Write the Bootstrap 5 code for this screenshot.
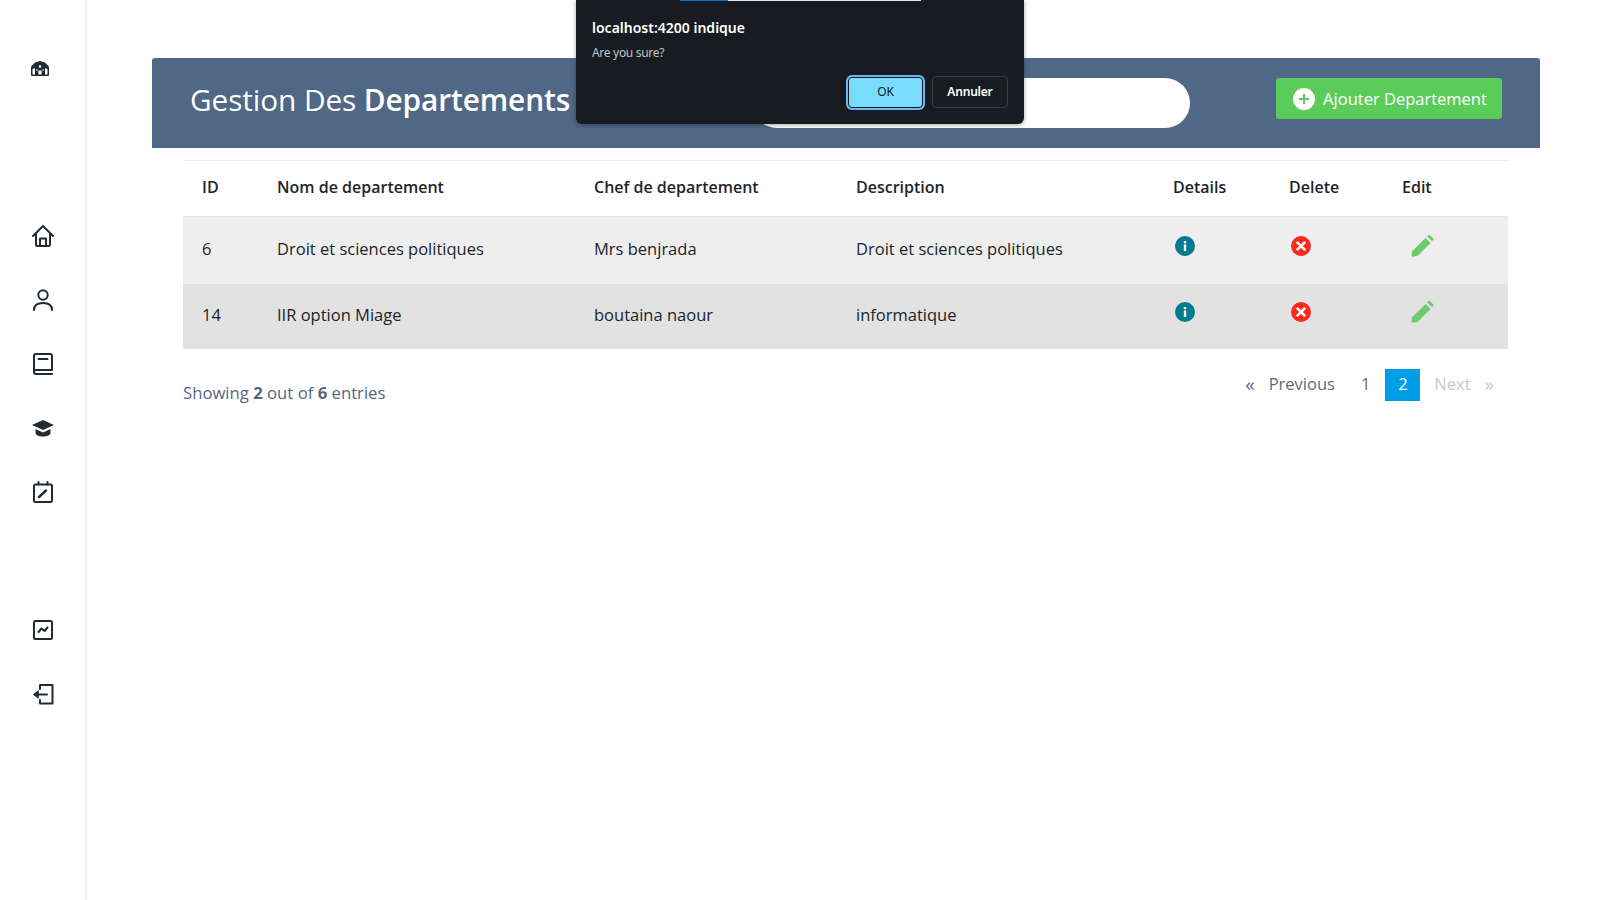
<!DOCTYPE html>
<html lang="fr">
<head>
  <meta charset="UTF-8" />
  <meta name="viewport" content="width=device-width, initial-scale=1" />
  <title>Gestion Des Departements</title>
  <link href="https://cdn.jsdelivr.net/npm/bootstrap@5.3.0/dist/css/bootstrap.min.css" rel="stylesheet"/>
  <style>
    body {
      font-family: "Open Sans", "Noto Sans", sans-serif;
      color: #212529;
      background: #fff;
      min-height: 100vh;
    }
    .side-rail {
      width: 87px;
      min-height: 100vh;
      border-right: 2px solid #eceeef;
      padding-top: 61px;
      flex-shrink: 0;
    }
    .side-rail svg { display: block; color: #212b33; }
    .rail-logo { margin-left: 31px; margin-bottom: 149px; }
    .rail-group { display: flex; flex-direction: column; gap: 42px; margin-left: 32px; }
    .rail-group + .rail-group { margin-top: 116px; }

    .page-head {
      background: #506786;
      height: 90px;
      margin: 58px 60px 0 65px;
      padding: 20px 38px 0 38px;
      border-radius: 3px 3px 0 0;
      color: #fff;
    }
    .page-title { font-size: 29.8px; font-weight: 400; line-height: 44px; margin: 0; letter-spacing: -.1px; }
    .page-title b { font-weight: 600; }
    .head-search {
      width: 438px;
      height: 50px;
      border: 0;
      border-radius: 25px;
      background: #fff;
    }
    .btn-add {
      background: #5bcb5a;
      color: #fff;
      font-size: 16.5px;
      height: 41px;
      width: 226px;
      margin-left: 86px;
      border: 0;
      border-radius: 3px;
      padding: 1px 0 0 2px;
    }
    .btn-add:hover { background: #5bcb5a; color: #fff; }

    .dept-wrap { margin: 12px 92px 0 96px; }
    .dept-table { table-layout: fixed; font-size: 16.5px; margin: 0; border-top: 1px solid #e9ecef; }
    .dept-table th, .dept-table td { padding: 0 0 2px 19px; vertical-align: middle; border: 0; }
    .dept-table thead th { height: 56px; font-size: 16px; font-weight: 600; padding-bottom: 4px; border-bottom: 1px solid #e4e6e8; }
    .dept-table tbody td { height: 65px; }
    .dept-table tr.row-light td { height: 67px; }
    .dept-table tr.row-light { --bs-table-bg: #eeeeee; }
    .dept-table tr.row-dark { --bs-table-bg: #e2e2e2; }
    .col-id { width: 75px; }
    .col-nom { width: 317px; }
    .col-chef { width: 262px; }
    .col-desc { width: 317px; }
    .col-details { width: 116px; }
    .col-delete { width: 113px; }
    .act-icon { display: block; margin-bottom: 7px; }
    .act-details { margin-left: 2px; }
    .act-delete { margin-left: 2px; }
    .act-edit { margin-left: 9px; }

    .table-foot { margin-top: 20px; color: #55657c; font-size: 16.7px; }
    .foot-info { padding-top: 11px; }
    .foot-info b { font-weight: 700; }
    .pager { display: flex; align-items: center; margin-right: 14px; height: 32px; color: #5a6a85; font-size: 16.5px; }
    .pager span { line-height: 30px; padding-bottom: 2px; }
    .pager .pg-prev { margin-right: 16px; }
    .pager .pg-arrow { margin-right: 14px; font-size: 19px; }
    .pager .pg-num { margin: 0 15px 0 10px; }
    .pager .pg-on { background: #009de8; color: #fff; width: 35px; text-align: center; }
    .pager .pg-off { color: #c4c8cb; margin-left: 14px; }
    .pager .pg-off + .pg-off { margin-left: 14px; font-size: 19px; }

    .alert-box {
      position: absolute;
      left: 576px;
      top: 0;
      width: 448px;
      height: 124px;
      background: #181c20;
      color: #fff;
      border-radius: 0 0 6px 6px;
      box-shadow: 0 1px 4px rgba(0, 0, 0, .35);
      padding: 18px 16px 0;
    }
    .alert-load {
      position: absolute;
      top: 0;
      left: 104px;
      width: 241px;
      height: 1px;
      background: linear-gradient(to right, #0a6fd0 48px, #e6e6e6 48px);
    }
    .alert-title { font-size: 14px; font-weight: 600; line-height: 20px; font-family: "Noto Sans", sans-serif; }
    .alert-text { font-size: 12px; line-height: 16px; margin-top: 7px; color: #bfc3c6; letter-spacing: -.3px; font-family: "Noto Sans", sans-serif; }
    .alert-btns { position: absolute; right: 16px; bottom: 16px; align-items: center; }
    .alert-ok, .alert-no {
      font-family: "Noto Sans", sans-serif;
      font-size: 12px;
      padding: 0;
      border-radius: 4px;
      letter-spacing: -.2px;
    }
    .alert-ok {
      width: 75px;
      height: 31px;
      background: #78dcff;
      color: #14181c;
      border: 1px solid #14181c;
      box-shadow: 0 0 0 2px #6fb4f5;
      margin-right: 9px;
    }
    .alert-no {
      width: 76px;
      height: 32px;
      background: #181c20;
      color: #fff;
      font-weight: 600;
      border: 1px solid #3a3f44;
    }
  </style>
</head>

<body class="d-flex position-relative">

  <!-- Sidebar -->
  <aside class="side-rail">
    <svg class="rail-logo" width="18" height="15" viewBox="0 0 18 15">
      <path fill="currentColor" d="M9 0 14 1.500 17 4.500 18 6V14A1 1 0 0 1 17 15H1A1 1 0 0 1 0 14V6L1 4.500 4 1.500Z"/>
      <path fill="#fff" d="M1.500 8 4 7V13.500H1.500ZM14 7 16.500 8V13.500H14ZM7.400 9.500H10.600V13.500H7.400ZM5.400 8H6.400V10H5.400ZM11.600 8H12.600V10H11.600Z"/>
      <circle cx="9" cy="5.500" r="1.300" fill="#fff"/>
    </svg>

    <div class="rail-group">
      <svg width="22" height="22" viewBox="0 0 22 22" fill="none" stroke="currentColor" stroke-width="2" stroke-linecap="round" stroke-linejoin="round">
        <path d="M1 11 11 1 21 11"/><path d="M4 8.500V19.500A1.500 1.500 0 0 0 5.500 21H16.500A1.500 1.500 0 0 0 18 19.500V8.500"/><path d="M8 21V13.500H14V21"/>
      </svg>
      <svg width="22" height="22" viewBox="0 0 22 22" fill="none" stroke="currentColor" stroke-width="2" stroke-linecap="round">
        <circle cx="11" cy="6" r="4.700"/><path d="M2 21C2 16 5.500 14 11 14S20 16 20 21"/>
      </svg>
      <svg width="22" height="22" viewBox="0 0 22 22" fill="none" stroke="currentColor" stroke-width="2" stroke-linecap="round" stroke-linejoin="round">
        <path d="M20 17H4A2 2 0 0 0 2 19V3A2 2 0 0 1 4 1H18A2 2 0 0 1 20 3Z"/><path d="M2 19A2 2 0 0 0 4 21H20"/><path d="M6.500 6H15.500"/>
      </svg>
      <svg width="22" height="22" viewBox="0 0 22 22">
        <path fill="currentColor" d="M11 3 22 8 11 13 0 8Z"/>
        <path fill="currentColor" d="M3.500 12 11 15.500 18.500 12V16C18.500 18 15 19.500 11 19.500S3.500 18 3.500 16Z"/>
      </svg>
      <svg width="22" height="22" viewBox="0 0 22 22" fill="none" stroke="currentColor" stroke-width="2" stroke-linecap="round">
        <rect x="2" y="3.500" width="18" height="17.500" rx="1.500"/><path d="M6.500 1V3.500M15.500 1V3.500"/>
        <path d="M7 16 14 9.500" stroke-width="2.400"/>
      </svg>
    </div>

    <div class="rail-group">
      <svg width="22" height="22" viewBox="0 0 22 22" fill="none" stroke="currentColor" stroke-width="2" stroke-linejoin="round" stroke-linecap="round">
        <rect x="2" y="2" width="18" height="18" rx="1.500"/><path d="M6.500 13 9.500 9.500 12.500 12 15.500 8.500"/>
      </svg>
      <svg width="22" height="22" viewBox="0 0 22 22" fill="none" stroke="currentColor" stroke-width="2" stroke-linejoin="round" stroke-linecap="round">
        <path d="M8 6V2H20.500V20.500H8V17"/><path d="M15 11.500H4"/><path fill="currentColor" stroke-width="1" d="M6 8 1.500 11.500 6 15Z"/>
      </svg>
    </div>
  </aside>

  <!-- Contenu -->
  <main class="flex-grow-1">
    <div class="page-head d-flex align-items-start">
      <h1 class="page-title">Gestion Des <b>Departements</b></h1>
      <input class="head-search ms-auto" type="text" aria-label="Recherche"/>
      <button class="btn btn-add d-flex align-items-center justify-content-center gap-2" type="button">
        <svg width="22" height="22" viewBox="0 0 22 22">
          <circle cx="11" cy="11" r="11" fill="#fff"/>
          <path d="M11 6V16M6 11H16" stroke="#5bcb5a" stroke-width="2"/>
        </svg>
        <span>Ajouter Departement</span>
      </button>
    </div>

    <div class="dept-wrap">
      <table class="table dept-table">
        <colgroup>
          <col class="col-id"/><col class="col-nom"/><col class="col-chef"/><col class="col-desc"/><col class="col-details"/><col class="col-delete"/><col/>
        </colgroup>
        <thead>
          <tr>
            <th>ID</th>
            <th>Nom de departement</th>
            <th>Chef de departement</th>
            <th>Description</th>
            <th>Details</th>
            <th>Delete</th>
            <th>Edit</th>
          </tr>
        </thead>
        <tbody id="dept-body"></tbody>
      </table>

      <div class="table-foot d-flex justify-content-between align-items-start">
        <div class="foot-info">Showing <b>2</b> out of <b>6</b> entries</div>
        <div class="pager">
          <span class="pg-arrow">«</span>
          <span class="pg-prev">Previous</span>
          <span class="pg-num">1</span>
          <span class="pg-on">2</span>
          <span class="pg-off">Next</span>
          <span class="pg-off">»</span>
        </div>
      </div>
    </div>
  </main>

  <!-- Boite de confirmation du navigateur -->
  <div class="alert-box">
    <div class="alert-load"></div>
    <div class="alert-title">localhost:4200 indique</div>
    <div class="alert-text">Are you sure?</div>
    <div class="alert-btns d-flex">
      <button class="btn alert-ok" type="button">OK</button>
      <button class="btn alert-no" type="button">Annuler</button>
    </div>
  </div>

  <script>
    const departements = [
      { id: 6, nom: 'Droit et sciences politiques', chef: 'Mrs benjrada', description: 'Droit et sciences politiques', cls: 'row-light' },
      { id: 14, nom: 'IIR option Miage', chef: 'boutaina naour', description: 'informatique', cls: 'row-dark' }
    ];

    const iconDetails = `<svg class="act-icon act-details" width="20" height="20" viewBox="0 0 20 20">
      <circle cx="10" cy="10" r="10" fill="#067a8f"/><rect x="8.800" y="8.500" width="2.400" height="6.500" fill="#fff"/><rect x="8.800" y="5" width="2.400" height="2.300" fill="#fff"/></svg>`;
    const iconDelete = `<svg class="act-icon act-delete" width="20" height="20" viewBox="0 0 20 20">
      <circle cx="10" cy="10" r="10" fill="#fb2a1c"/><path d="M5.800 5.800 14.200 14.200M14.200 5.800 5.800 14.200" stroke="#fff" stroke-width="2.600"/></svg>`;
    const iconEdit = `<svg class="act-icon act-edit" width="23" height="23" viewBox="0 0 23 23">
      <path fill="#6ccb6b" d="M14.500 4 19.500 9 6.500 22 1.500 22.800 0.500 21.800 1 17.500ZM16 2.500 18 .500 23 5 21 7Z"/></svg>`;

    document.getElementById('dept-body').innerHTML = departements.map(d => `
      <tr class="${d.cls}">
        <td>${d.id}</td>
        <td>${d.nom}</td>
        <td>${d.chef}</td>
        <td>${d.description}</td>
        <td>${iconDetails}</td>
        <td>${iconDelete}</td>
        <td>${iconEdit}</td>
      </tr>`).join('');
  </script>

  <script src="https://cdn.jsdelivr.net/npm/bootstrap@5.3.0/dist/js/bootstrap.bundle.min.js"></script>
</body>
</html>
